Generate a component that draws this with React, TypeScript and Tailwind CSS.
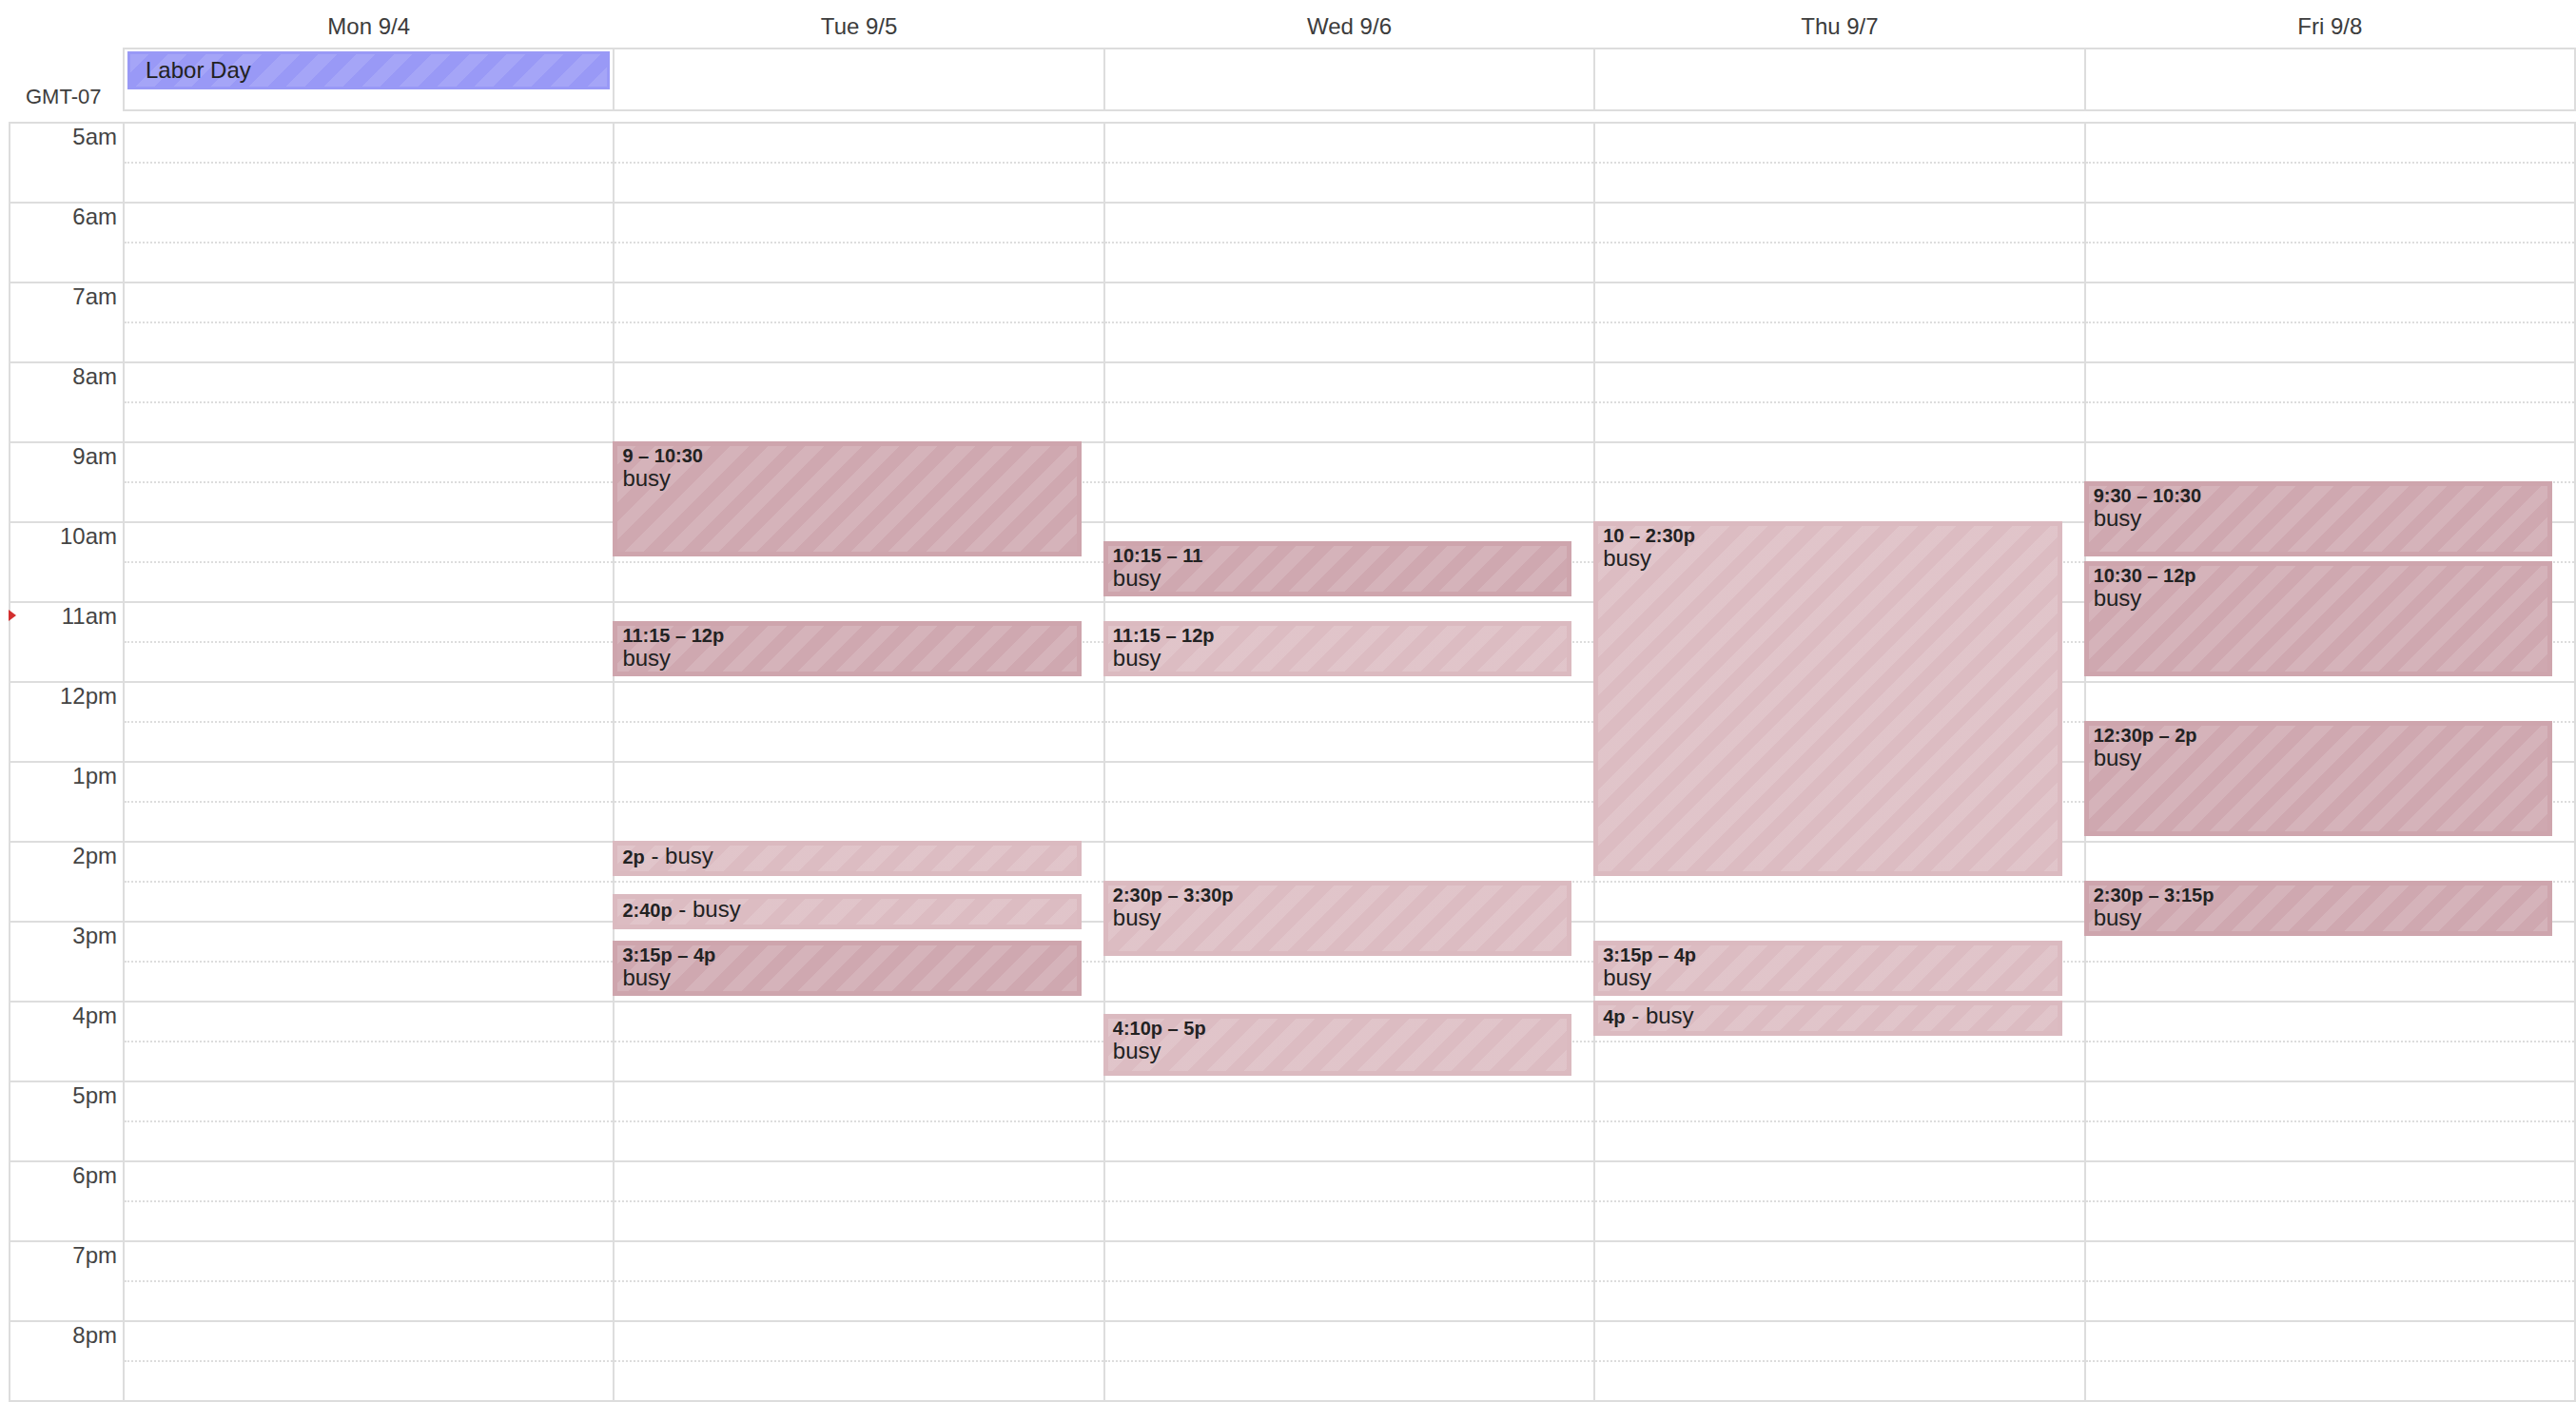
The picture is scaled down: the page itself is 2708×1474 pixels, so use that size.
import React from "react";

const HOURS = [
  "5am", "6am", "7am", "8am", "9am", "10am", "11am", "12pm",
  "1pm", "2pm", "3pm", "4pm", "5pm", "6pm", "7pm", "8pm",
];

const DAYS = ["Mon 9/4", "Tue 9/5", "Wed 9/6", "Thu 9/7", "Fri 9/8"];

const HOUR_H = 84;
const FIRST_HOUR = 5;

type CalEvent = {
  day: number;
  start: number;
  end: number;
  time: string;
  tone: "dark" | "light";
  inline?: boolean;
};

const events: CalEvent[] = [
  // Tue
  { day: 1, start: 9, end: 10.5, time: "9 – 10:30", tone: "dark" },
  { day: 1, start: 11.25, end: 12, time: "11:15 – 12p", tone: "dark" },
  { day: 1, start: 14, end: 14.5, time: "2p", tone: "light", inline: true },
  { day: 1, start: 14 + 40 / 60, end: 15 + 10 / 60, time: "2:40p", tone: "light", inline: true },
  { day: 1, start: 15.25, end: 16, time: "3:15p – 4p", tone: "dark" },
  // Wed
  { day: 2, start: 10.25, end: 11, time: "10:15 – 11", tone: "dark" },
  { day: 2, start: 11.25, end: 12, time: "11:15 – 12p", tone: "light" },
  { day: 2, start: 14.5, end: 15.5, time: "2:30p – 3:30p", tone: "light" },
  { day: 2, start: 16 + 10 / 60, end: 17, time: "4:10p – 5p", tone: "light" },
  // Thu
  { day: 3, start: 10, end: 14.5, time: "10 – 2:30p", tone: "light" },
  { day: 3, start: 15.25, end: 16, time: "3:15p – 4p", tone: "light" },
  { day: 3, start: 16, end: 16.5, time: "4p", tone: "light", inline: true },
  // Fri
  { day: 4, start: 9.5, end: 10.5, time: "9:30 – 10:30", tone: "dark" },
  { day: 4, start: 10.5, end: 12, time: "10:30 – 12p", tone: "dark" },
  { day: 4, start: 12.5, end: 14, time: "12:30p – 2p", tone: "dark" },
  { day: 4, start: 14.5, end: 15.25, time: "2:30p – 3:15p", tone: "dark" },
];

function EventBlock({ ev }: { ev: CalEvent }) {
  const top = (ev.start - FIRST_HOUR) * HOUR_H - 2;
  const height = (ev.end - ev.start) * HOUR_H - 5;
  return (
    <div
      className={`absolute left-[-2px] right-[23px] overflow-hidden z-10 ${
        ev.tone === "dark" ? "bg-[#cea5ad]" : "bg-[#dbbac0]"
      }`}
      style={{ top, height }}
    >
      {/* striped busy pattern */}
      <div className="absolute inset-[5px] bg-white/[0.04] bg-[repeating-linear-gradient(135deg,rgba(255,255,255,0.13)_0px,rgba(255,255,255,0.13)_14px,transparent_14px,transparent_28px)]" />
      <div className="relative pl-[10px] pt-[4px] text-[#222]">
        {ev.inline ? (
          <div className="leading-[24px] whitespace-nowrap">
            <span className="font-bold text-[20px]">{ev.time}</span>
            <span className="text-[24px]"> - busy</span>
          </div>
        ) : (
          <>
            <div className="font-bold text-[20px] leading-[22px] whitespace-nowrap">
              {ev.time}
            </div>
            <div className="text-[24px] leading-[26px]">busy</div>
          </>
        )}
      </div>
    </div>
  );
}

export default function App() {
  return (
    <div className="w-[2708px] h-[1474px] overflow-hidden bg-white pl-[9px] font-['Liberation_Sans',Arial,sans-serif] text-[24px]">
      {/* day headers */}
      <div className="flex h-[50px]">
        <div className="w-[120px] shrink-0" />
        <div className="flex flex-1 pr-[2px]">
          {DAYS.map((d) => (
            <div
              key={d}
              className="flex-1 flex items-center justify-center pt-[5px] pl-[2px] text-[#3c3c3c]"
            >
              {d}
            </div>
          ))}
        </div>
      </div>

      {/* all-day row */}
      <div className="flex h-[67px]">
        <div className="w-[120px] shrink-0 flex items-end pl-[18px] pb-[2px] text-[22px] leading-[26px] text-[#3c3c3c]">
          GMT-07
        </div>
        <div className="flex flex-1 border-t-2 border-b-2 border-r-2 border-[#ddd]">
          {DAYS.map((d, i) => (
            <div key={d} className="flex-1 border-l-2 border-[#ddd]">
              {i === 0 && (
                <div className="relative mx-[3px] mt-[2px] h-[40px] bg-[#9999f6] flex items-center pl-[19px] text-[#222]">
                  <div className="absolute inset-[3px] bg-[repeating-linear-gradient(135deg,rgba(255,255,255,0.12)_0px,rgba(255,255,255,0.12)_14px,transparent_14px,transparent_28px)]" />
                  <span className="relative">Labor Day</span>
                </div>
              )}
            </div>
          ))}
        </div>
      </div>

      {/* time grid */}
      <div className="relative mt-[11px] flex border-t-2 border-l-2 border-[#ddd]">
        {/* now indicator arrow */}
        <div className="absolute left-[-2px] top-[511px] w-0 h-0 border-y-[6px] border-y-transparent border-l-[8px] border-l-[#d32f2f] z-20" />

        <div className="w-[118px] shrink-0">
          {HOURS.map((h) => (
            <div
              key={h}
              className="h-[84px] border-b-2 border-[#ddd] text-right pr-[6px] leading-[27px] text-[#444]"
            >
              {h}
            </div>
          ))}
        </div>

        <div className="flex flex-1 border-r-2 border-[#ddd]">
          {DAYS.map((d, di) => (
            <div key={d} className="relative flex-1 border-l-2 border-[#ddd]">
              {HOURS.map((h) => (
                <div key={h} className="h-[84px] border-b-2 border-[#ddd]">
                  <div className="h-[42px] border-b-2 border-dotted border-[#ddd]" />
                </div>
              ))}
              {events
                .filter((e) => e.day === di)
                .map((e, k) => (
                  <EventBlock key={k} ev={e} />
                ))}
            </div>
          ))}
        </div>
      </div>
    </div>
  );
}
